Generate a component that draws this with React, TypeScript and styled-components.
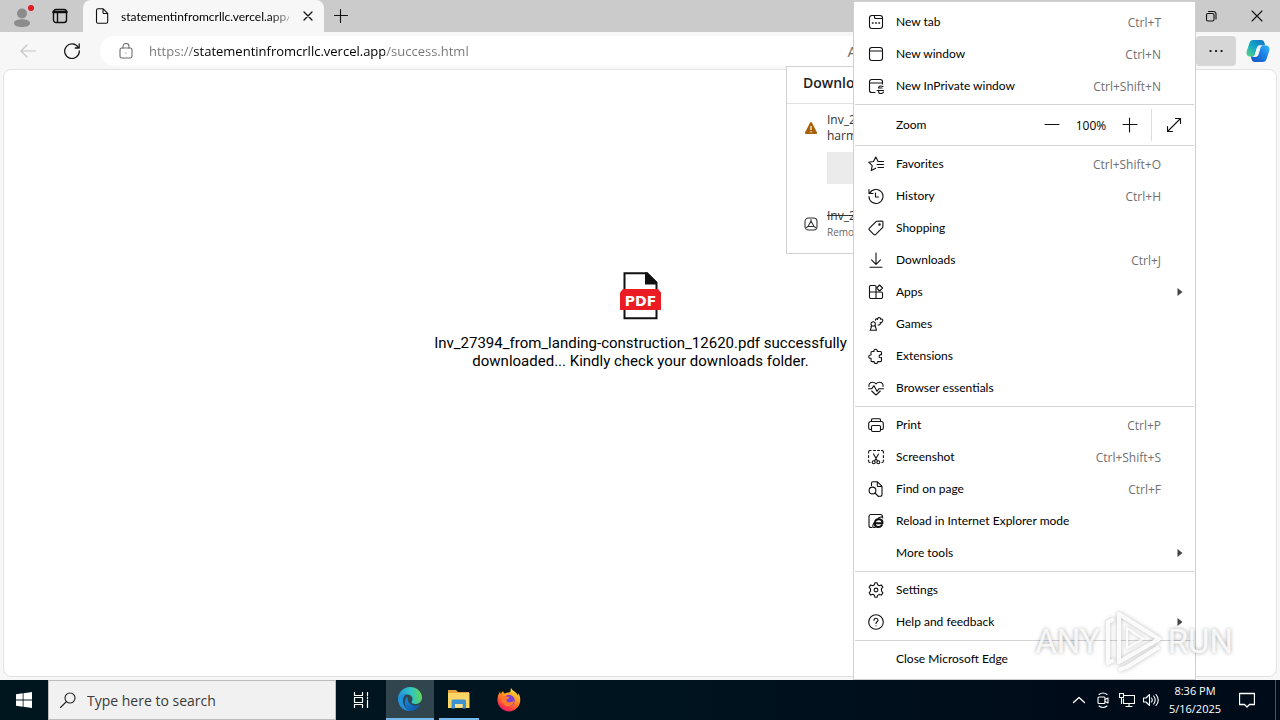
import React from "react";
import styled, { createGlobalStyle } from "styled-components";

const UI_FONT = `"Open Sans", "Noto Sans", "Liberation Sans", sans-serif`;
const LABEL_FONT = `Lato, "Open Sans", "Liberation Sans", sans-serif`;

const GlobalStyle = createGlobalStyle`
  *, *::before, *::after { box-sizing: border-box; }
  body { margin: 0; background: #f7f7f7; font-family: ${UI_FONT}; font-size: 12px; color: #111; }
  button, input { font: inherit; color: inherit; border: 0; background: none; padding: 0; margin: 0; outline: none; }
  svg { display: block; flex: none; }
`;

/* ---------- shell ---------- */

const Desktop = styled.div`
  display: flex;
  flex-direction: column;
  min-height: 100vh;
  overflow: hidden;
`;

const Browser = styled.div`
  position: relative;
  display: flex;
  flex-direction: column;
  flex: 1;
  background: #f7f7f7;
`;

const TabStrip = styled.header`
  display: flex;
  height: 32px;
  background: #cbcbcb;
`;

const StripTools = styled.div`
  display: flex;
  align-items: center;
  gap: 16px;
  width: 83px;
  padding-left: 10px;
`;

const PlainButton = styled.button`
  display: flex;
  align-items: center;
  justify-content: center;
`;

const Tab = styled.div`
  display: flex;
  align-items: center;
  width: 241px;
  padding: 0 8px 0 11px;
  gap: 11px;
  background: #f7f7f7;
  border-radius: 8px 8px 0 0;
`;

const TabTitle = styled.span`
  flex: 1;
  min-width: 0;
  font-family: ${LABEL_FONT};
  color: #000;
  white-space: nowrap;
  mask-image: linear-gradient(90deg, #000 88%, rgba(0, 0, 0, 0.3));
`;

const NewTab = styled(PlainButton)`
  width: 34px;
`;

const WindowControls = styled.div`
  display: flex;
  margin-left: auto;
`;

const ControlButton = styled(PlainButton)`
  width: 46px;
`;

const Toolbar = styled.div`
  display: flex;
  align-items: center;
  height: 37px;
  padding: 0 10px 0 16px;
`;

const NavButton = styled(PlainButton)<{ $dim?: boolean }>`
  width: 24px;
  height: 24px;
  margin-right: 20px;
  color: ${(p) => (p.$dim ? "#c4c4c4" : "#1a1a1a")};
`;

const AddressBar = styled.label`
  display: flex;
  align-items: center;
  gap: 15px;
  flex: 1;
  height: 30px;
  margin-right: 190px;
  margin-left: -4px;
  padding: 0 149px 0 18px;
  border-radius: 15px;
  background: #fff;
  color: #6e6e6e;
`;

const AddressInput = styled.input`
  flex: 1;
  min-width: 0;
  font-size: 13px;
  color: transparent;
  background: linear-gradient(90deg, #757575 44px, #000 44px, #000 236px, #757575 236px);
  background-clip: text;
  -webkit-background-clip: text;
`;

const ReadAloud = styled.span`
  font-size: 15px;
`;

const MoreButton = styled(PlainButton)`
  width: 40px;
  height: 30px;
  border-radius: 4px;
  background: #d6d6d6;
`;

const CopilotButton = styled(PlainButton)`
  margin-left: 10px;
`;

const Page = styled.main`
  display: flex;
  flex-direction: column;
  align-items: center;
  flex: 1;
  margin: 0 3px 3px;
  padding: 201px 0 0 1px;
  background: #fff;
  border: 1px solid #e2e2e2;
  border-radius: 8px;
`;

const Message = styled.p`
  width: 420px;
  margin: 13px 0 0;
  font: 15px/18px Roboto, sans-serif;
  color: #000;
  text-align: center;
`;

/* ---------- downloads flyout ---------- */

const Flyout = styled.section`
  position: absolute;
  top: 66px;
  right: 126px;
  width: 368px;
  height: 188px;
  overflow: hidden;
  background: #fff;
  border: 1px solid #d2d2d2;
`;

const FlyoutTitle = styled.h2`
  margin: 0;
  padding: 6px 16px 10px;
  font-size: 14px;
  line-height: 20px;
  font-weight: 600;
  color: #222;
  border-bottom: 1px solid #e0e0e0;
`;

const DownloadRow = styled.div<{ $removed?: boolean }>`
  display: flex;
  align-items: ${(p) => (p.$removed ? "center" : "flex-start")};
  gap: 8px;
  padding: ${(p) => (p.$removed ? "24px 16px 0 16px" : "8px 16px 0 16px")};
  line-height: 16px;
  color: #333;
  white-space: nowrap;
`;

const WarnSlot = styled.span`
  padding-top: 8px;
`;

const KeepButton = styled.button`
  display: block;
  width: 160px;
  height: 32px;
  margin: 8px 0 0 40px;
  background: #ebebeb;
`;

const Removed = styled.small`
  display: block;
  font-size: 10px;
  color: #666;
`;

/* ---------- settings menu ---------- */

const Menu = styled.nav`
  position: absolute;
  top: 1px;
  right: 84px;
  width: 343px;
  padding: 4px 0;
  background: #fff;
  border: 1px solid #cfcfcf;
`;

const MenuItem = styled.button`
  display: flex;
  align-items: center;
  width: 100%;
  height: 32px;
  padding-left: 14px;
  text-align: left;
`;

const IconSlot = styled.span`
  width: 28px;
`;

const Label = styled.span`
  flex: 1;
  padding-bottom: 2px;
  font-family: ${LABEL_FONT};
  color: #000;
`;

const Shortcut = styled.span`
  padding-right: 1px;
  color: #707070;
`;

const ArrowSlot = styled.span`
  display: flex;
  justify-content: center;
  width: 33px;
  padding-left: 2px;
  color: #444;
`;

const Divider = styled.hr<{ $tight?: "top" | "bottom" }>`
  height: 1px;
  margin: ${(p) => (p.$tight === "top" ? "0 1px 2px" : p.$tight === "bottom" ? "2px 1px 0" : "2px 1px")};
  border: 0;
  background: #d4d4d4;
`;

const ZoomRow = styled.div`
  display: flex;
  align-items: center;
  height: 40px;
  padding-left: 42px;
`;

const ZoomButton = styled(PlainButton)`
  width: 38px;
  height: 32px;
`;

const ZoomValue = styled.output`
  width: 40px;
  color: #000;
  text-align: center;
`;

const FullscreenButton = styled(PlainButton)`
  width: 44px;
  height: 32px;
  margin-left: 2px;
  border-left: 1px solid #dcdcdc;
`;

/* ---------- watermark ---------- */

const Watermark = styled.div`
  position: absolute;
  right: 47px;
  bottom: 6px;
  display: flex;
  align-items: center;
  gap: 4px;
  font: 400 33px/64px Roboto, "Liberation Sans", sans-serif;
  color: rgba(255, 255, 255, 0.85);
  text-shadow: 0 0 4px rgba(0, 0, 0, 0.35);
  pointer-events: none;

  svg { filter: drop-shadow(0 0 2px rgba(0, 0, 0, 0.3)); }
`;

/* ---------- taskbar ---------- */

const Taskbar = styled.footer`
  display: flex;
  height: 40px;
  background: linear-gradient(90deg, #00161f, #001420 50%, #000b1a 85%);
  color: #fff;
`;

const TaskButton = styled(PlainButton)<{ $active?: boolean }>`
  width: ${(p) => (p.$active ? 48 : 50)}px;
  background: ${(p) => (p.$active ? "#31454e" : "transparent")};
  border-bottom: ${(p) => (p.$active ? "2px solid #76b9ed" : "0")};
`;

const RunningButton = styled(PlainButton)`
  width: 40px;
  margin: 0 5px;
  border-bottom: 2px solid #76b9ed;
`;

const SearchBox = styled.label`
  display: flex;
  align-items: center;
  gap: 11px;
  width: 288px;
  padding-left: 11px;
  background: #f1f1f1;
  border: 1px solid #bdbdbd;
  color: #222;
`;

const StartButton = styled(PlainButton)`
  width: 48px;
`;

const SearchInput = styled.input`
  flex: 1;
  min-width: 0;
  font-size: 14px;
  &::placeholder { color: #3a3a3a; opacity: 1; }
`;

const Tray = styled.div`
  display: flex;
  align-items: center;
  margin-left: auto;
`;

const TrayButton = styled(PlainButton)`
  width: 24px;
  height: 40px;
`;

const Clock = styled.time`
  width: 64px;
  font-size: 11px;
  text-align: center;
  line-height: 18px;
`;

const NoticeButton = styled(PlainButton)`
  width: 40px;
  height: 40px;
  margin-right: 8px;
`;

const ShowDesktop = styled.button`
  width: 5px;
  height: 40px;
  border-left: 1px solid #4b5560;
`;

/* ---------- drawings ---------- */

type IconProps = { children: React.ReactNode; size?: number; box?: number };

const Icon = ({ children, size = 16, box = 16 }: IconProps) => (
  <svg
    width={size}
    height={size}
    viewBox={`0 0 ${box} ${box}`}
    fill="none"
    stroke="currentColor"
    strokeWidth="1.1"
    strokeLinecap="round"
    strokeLinejoin="round"
    aria-hidden="true"
  >
    {children}
  </svg>
);

const icons = {
  newTab: (
    <Icon>
      <rect x="1.5" y="1.5" width="13" height="13" rx="2.5" />
      <path d="M6.5 1.5v2q0 1 1 1h7" />
      <path d="M4.5 9h.6M7.7 9h.6M10.9 9h.6" strokeWidth="1.5" />
    </Icon>
  ),
  newWindow: (
    <Icon>
      <rect x="1.5" y="1.5" width="13" height="13" rx="2.5" />
      <path d="M1.5 5h13" />
    </Icon>
  ),
  inPrivate: (
    <Icon>
      <path d="M7 14.500H3.800A2.300 2.300 0 0 1 1.500 12.200V3.800A2.300 2.300 0 0 1 3.800 1.500h8.400A2.300 2.300 0 0 1 14.500 3.800V6M1.500 5h13" />
      <path d="M15 8.500c-3-1.200-4.500.2-4.500 1.500h3.500M9 12.500h6.500M11 12.500c-1 2 0 3 1.500 3s2.500-.5 3-1.500" />
    </Icon>
  ),
  favorites: (
    <Icon>
      <path d="M10 5.300 7.800 1 5.500 5.500.7 6.200l3.500 3.400-.9 5L7.700 12.300M10 5.500h5.500M9 8.500h6.500M10 11.500h5.500" />
    </Icon>
  ),
  history: (
    <Icon>
      <path d="M1.700 5.400A7 7 0 1 1 1 8.500M1 1.500v4h4M7.500 5v4h3" />
    </Icon>
  ),
  shopping: (
    <Icon>
      <path d="M8.600 1.200 14 1a1 1 0 0 1 1 1l-.2 5.400-7 7a1.500 1.500 0 0 1-2.100 0L1.500 10.200a1.500 1.500 0 0 1 0-2.100z" />
      <circle cx="11.500" cy="4.500" r=".7" />
    </Icon>
  ),
  downloads: (
    <Icon>
      <path d="M8 1v11M3.500 7.800 8 12.300l4.500-4.500M2 15.300h12" />
    </Icon>
  ),
  apps: (
    <Icon>
      <path d="M8 14.500V2.700a1.200 1.200 0 0 0-1.200-1.200H2.700a1.200 1.200 0 0 0-1.200 1.200v10.600a1.200 1.200 0 0 0 1.200 1.200h10.600a1.200 1.200 0 0 0 1.200-1.200V9.200A1.200 1.200 0 0 0 13.300 8H1.500" />
      <path d="m11.600 1 3 3-3 3-3-3z" />
    </Icon>
  ),
  games: (
    <Icon>
      <path d="M2 14.200h6.500M2.500 14c0-2 1-2.500 1-4H3.200M7 10h.3c0 1.500 1 2 1 4M3 10h4.500M3.700 9.500a2.200 2.200 0 1 1 3 0" />
      <path d="M7.500 4.300c-.2-1.500 1.500-2 2-.8C9.200 1 13 1 12.500 3.200c2.300-.7 2.800 1.500 1.700 2.300 0 1.500-1.700 1.700-2 .8.500 1.700-.2 2.700-2.200 2.700" />
    </Icon>
  ),
  extensions: (
    <Icon>
      <path d="M6 3.500C5.200.5 10 .5 9.200 3.500h3.300a1 1 0 0 1 1 1v2.300c-3-1-3.300 3.700 0 2.800v3a1 1 0 0 1-1 1H9.700c.5 2.500-4.200 2.500-3.500 0H4a1 1 0 0 1-1-1v-2.400C0 11 0 6.500 3 7V4.500a1 1 0 0 1 1-1z" />
    </Icon>
  ),
  essentials: (
    <Icon>
      <path d="M1 6.500C.2 3 4.800.500 8 3.800 11.200.500 15.800 3 15 6.500M3.700 11 8 15l4.300-4M.5 8.700h3.300L6 5.700l3 5.600 2-2.600h4.500" />
    </Icon>
  ),
  print: (
    <Icon>
      <path d="M3.500 12.500H2.200A1.600 1.600 0 0 1 .700 11V6.500a2 2 0 0 1 2-2h10.600a2 2 0 0 1 2 2V11a1.500 1.500 0 0 1-1.500 1.500h-1.300M3.500 4.500V3A1.400 1.400 0 0 1 5 1.700h6A1.400 1.400 0 0 1 12.500 3v1.500" />
      <rect x="3.500" y="8.500" width="9" height="6" rx="1.200" />
    </Icon>
  ),
  screenshot: (
    <Icon>
      <path d="M.6 4V3A1.500 1.500 0 0 1 2 1.500h1M5.500 1.500h2M9.500 1.500h2M13.500 1.500A1.500 1.500 0 0 1 15.400 3v1M15.400 6.500v2M.6 6.500v2M.6 11v1A1.500 1.500 0 0 0 2 13.500M15.400 11v1a1.500 1.500 0 0 1-1.400 1.500" />
      <path d="m5.500 5 4 7M10.500 5l-4 7" />
      <circle cx="5.700" cy="13.200" r="1.500" />
      <circle cx="10.300" cy="13.200" r="1.500" />
    </Icon>
  ),
  find: (
    <Icon>
      <path d="M3.500 4.500V2.300A1.500 1.500 0 0 1 5 .8h4.500l4.500 4.500v8.400a1.500 1.500 0 0 1-1.500 1.500h-1.500M9.300 1v3.500a1 1 0 0 0 1 1H14" />
      <circle cx="4.500" cy="9.500" r="3.400" />
      <path d="m7 12 3.500 3.500" />
    </Icon>
  ),
  ieMode: (
    <Icon>
      <path d="M4 14.500H3A2 2 0 0 1 1 12.500V3.500a2 2 0 0 1 2-2h9.500a2 2 0 0 1 2 2" />
      <path d="M6.500 10.200h8c.2-5-7-5.300-7.700-.3-.5 4.800 5 5.300 7 2.300" strokeWidth="2" />
      <path d="M14.700 5c.3-2.200-3.200-.7-4.700.5M6 10c-2 3-1.700 5.500 1.500 4" />
    </Icon>
  ),
  settings: (
    <Icon>
      <path d="M6.400 2.700 6.900.8h2.200l.5 1.900 1.700 1 1.900-.8 1.700 2.200-1.400 1.600v2.300l1.400 1.900-1.600 2.200-2-.7-1.700 1-.5 1.800H6.900l-.5-1.900-1.700-1-2 .8-1.600-2.300L2.500 9.200V6.900L1.100 5.100l1.600-2.200 2 .8z" />
      <circle cx="8" cy="8" r="1.900" />
    </Icon>
  ),
  help: (
    <Icon>
      <circle cx="8" cy="8" r="7.300" />
      <path d="M6 6.200c0-2.700 4-2.500 4 0C10 7.700 8 7.800 8 9.500M8 11.700v.1" />
    </Icon>
  ),
};

const SubmenuArrow = () => (
  <svg width="6" height="8" viewBox="0 0 6 8" aria-hidden="true">
    <path d="M.500 0 5.500 4 .500 8z" fill="currentColor" />
  </svg>
);

const ProfileIcon = () => (
  <svg width="26" height="26" viewBox="0 0 26 26" aria-hidden="true">
    <circle cx="12" cy="10.500" r="5" fill="#8c8c8c" />
    <path d="M4 20c0-5 16-5 16 0 0 3-4 4-8 4s-8-1-8-4z" fill="#8c8c8c" />
    <circle cx="21" cy="5" r="3" fill="#e01b24" />
  </svg>
);

const PdfIcon = () => (
  <svg width="42" height="50" viewBox="0 0 42 50" role="img" aria-label="PDF file">
    <path d="M4.500 2.200h22.500l9.500 9.500v35.500h-32z" fill="#fff" stroke="#111" strokeWidth="2" />
    <path d="M25 1.500h2.500l9.500 9.500v2.500H25z" fill="#111" />
    <path d="M0 21.500 3 18h35l3 3.500V39H0z" fill="#ec1c24" />
    <text x="20.500" y="35" textAnchor="middle" fontFamily="DejaVu Sans, sans-serif" fontWeight="700" fontSize="14" fill="#fff">
      PDF
    </text>
  </svg>
);

const CopilotIcon = () => (
  <svg width="24" height="24" viewBox="0 0 24 24" aria-hidden="true">
    <defs>
      <linearGradient id="cpA" x1="0" y1="1" x2=".9" y2="0">
        <stop offset="0" stopColor="#5fd67c" />
        <stop offset=".5" stopColor="#14a9c8" />
        <stop offset="1" stopColor="#1272c4" />
      </linearGradient>
      <linearGradient id="cpB" x1="0" y1="1" x2="1" y2="0">
        <stop offset="0" stopColor="#1353b8" />
        <stop offset=".6" stopColor="#1f83ea" />
        <stop offset="1" stopColor="#35b9f4" />
      </linearGradient>
    </defs>
    <path d="M7.500 1h7.500c2 0 3 1 3.500 3l.7 2.500h-3c-2 0-3 .8-3.500 2.500l-2 6c-.6 1.800-1.500 2.500-3.500 2.500H4c-3 0-4-2.500-3.200-5.500L3.300 4.500C4 2 5 1 7.500 1z" fill="url(#cpA)" />
    <path d="M16.500 23H9c-2 0-3-1-3.500-3l-.7-2.500h3c2 0 3-.8 3.500-2.500l2-6.500c.6-1.800 1.500-2 3.500-2H20c3 0 4 2.500 3.200 5.500l-2.500 7.500C20 22 19 23 16.500 23z" fill="url(#cpB)" />
    <path d="M15.500 6.800h-1.800c-1.500 0-2 .7-2.500 2.200L9.500 14.700c-.4 1.500-.8 2.500-2 2.800h2c1.500 0 2.200-.7 2.600-2.200L13.800 9.500c.4-1.500.7-2.400 1.700-2.700z" fill="#f7f7f7" stroke="#f7f7f7" />
  </svg>
);

const EdgeIcon = () => (
  <svg width="24" height="24" viewBox="0 0 24 24" aria-hidden="true">
    <defs>
      <linearGradient id="edTop" x1="0" y1=".5" x2="1" y2=".4">
        <stop offset="0" stopColor="#2293dc" />
        <stop offset=".55" stopColor="#31c3c8" />
        <stop offset="1" stopColor="#62d84e" />
      </linearGradient>
      <linearGradient id="edLow" x1="0" y1="0" x2="1" y2="1">
        <stop offset="0" stopColor="#1b8de0" />
        <stop offset="1" stopColor="#0c4da2" />
      </linearGradient>
    </defs>
    <path d="M0 12C0 5 5.500 0 12 0c7 0 12 5 12 10.500 0 4-3 6.500-6.500 6.500-2.500 0-4-1-4-2 0-.7 1-1.200 1-3 0-2.500-2.300-4.500-6-4.500C4.500 7.500 1 9.500 0 12z" fill="url(#edTop)" />
    <path d="M0 12c1-3 4.500-4.700 8.500-4.500C6 8.500 4.500 11.500 5 15c.6 4.500 4 8 7 9C5 24 0 18.500 0 12z" fill="#1d92df" />
    <path d="M9.500 9.500c-5 4-2.500 12.500 2.500 14.500 4.500 0 8-2.500 10-5.800.2-.4-.2-.7-.7-.4-5.800 2.700-12.300-.8-11.800-8.300z" fill="url(#edLow)" />
  </svg>
);

const FolderIcon = () => (
  <svg width="24" height="24" viewBox="0 0 24 24" aria-hidden="true">
    <path d="M1 3h8l2 2h11v15H1z" fill="#e8a33a" />
    <path d="M1 6h21.500v15H1z" fill="#fbd667" />
    <path d="M4.500 21.500v-7.500q0-1.500 1.500-1.500h11.500q1.500 0 1.500 1.500v7.500h-3.500v-4.500h-7.500v4.500z" fill="#3e92d0" />
    <path d="M8 17h7.500v3H8z" fill="#fbe08c" />
  </svg>
);

const FirefoxIcon = () => (
  <svg width="24" height="24" viewBox="0 0 24 24" aria-hidden="true">
    <defs>
      <linearGradient id="ffBody" x1=".8" y1="0" x2=".3" y2="1">
        <stop offset="0" stopColor="#fff04a" />
        <stop offset=".4" stopColor="#ff9a1f" />
        <stop offset=".75" stopColor="#ff4a3a" />
        <stop offset="1" stopColor="#e6156e" />
      </linearGradient>
    </defs>
    <path d="M14 0c-1 3 .5 4.200-2.200 4.500-1.200 0-2.800.2-3.800 1-1-.3-1.600-1.200-1.700-2.300C5 3.800 4.200 5 4 6.200 3.300 5.500 3.200 4.500 3.300 3.500 1 6 .5 9 .5 12A11.400 11.400 0 0 0 23.300 12c0-3-.7-5-2.300-7 .2 1 .3 1.600 0 2.400C19.500 4 15.500 3 14 0z" fill="url(#ffBody)" />
    <circle cx="12" cy="12.500" r="5.700" fill="#7a42d8" />
    <path d="M4.800 8.500c2-1.300 4 .2 6 .2 1 0 1.700.5 1.200 1.300-1 1.200-2.500.8-2.500 2.200 0 3 5.500 2.500 7.500.6 0 5-6 7-9.500 4.200S4 11.500 4.800 8.500z" fill="#ff7a2a" />
  </svg>
);

const PlayMark = () => (
  <svg width="60" height="64" viewBox="0 0 60 64" fill="none" stroke="rgba(255,255,255,.9)" strokeWidth="4" strokeLinejoin="round" aria-hidden="true">
    <path d="M15 4v48L55 29z" />
    <path d="M10 9 4 12v41l6-3M15 60l8-3 32-20" />
    <path d="M23 18v20l16-9z" strokeWidth="2" />
  </svg>
);

/* ---------- data ---------- */

type Entry = { icon?: keyof typeof icons; label: string; keys?: string; sub?: boolean };

const windowItems: Entry[] = [
  { icon: "newTab", label: "New tab", keys: "Ctrl+T" },
  { icon: "newWindow", label: "New window", keys: "Ctrl+N" },
  { icon: "inPrivate", label: "New InPrivate window", keys: "Ctrl+Shift+N" },
];

const featureItems: Entry[] = [
  { icon: "favorites", label: "Favorites", keys: "Ctrl+Shift+O" },
  { icon: "history", label: "History", keys: "Ctrl+H" },
  { icon: "shopping", label: "Shopping" },
  { icon: "downloads", label: "Downloads", keys: "Ctrl+J" },
  { icon: "apps", label: "Apps", sub: true },
  { icon: "games", label: "Games" },
  { icon: "extensions", label: "Extensions" },
  { icon: "essentials", label: "Browser essentials" },
];

const pageItems: Entry[] = [
  { icon: "print", label: "Print", keys: "Ctrl+P" },
  { icon: "screenshot", label: "Screenshot", keys: "Ctrl+Shift+S" },
  { icon: "find", label: "Find on page", keys: "Ctrl+F" },
  { icon: "ieMode", label: "Reload in Internet Explorer mode" },
  { label: "More tools", sub: true },
];

const helpItems: Entry[] = [
  { icon: "settings", label: "Settings" },
  { icon: "help", label: "Help and feedback", sub: true },
];

const Items = ({ list }: { list: Entry[] }) => (
  <>
    {list.map((e) => (
      <MenuItem key={e.label} type="button">
        <IconSlot>{e.icon && icons[e.icon]}</IconSlot>
        <Label>{e.label}</Label>
        {e.keys && <Shortcut>{e.keys}</Shortcut>}
        <ArrowSlot>{e.sub && <SubmenuArrow />}</ArrowSlot>
      </MenuItem>
    ))}
  </>
);

const SettingsMenu = () => (
  <Menu aria-label="Settings and more">
    <Items list={windowItems} />
    <Divider $tight="bottom" />
    <ZoomRow>
      <Label>Zoom</Label>
      <ZoomButton type="button" aria-label="Zoom out">
        <Icon><path d="M1 7.500h14" /></Icon>
      </ZoomButton>
      <ZoomValue>100%</ZoomValue>
      <ZoomButton type="button" aria-label="Zoom in">
        <Icon><path d="M1 7.500h14M7.500 1v14" /></Icon>
      </ZoomButton>
      <FullscreenButton type="button" aria-label="Full screen">
        <Icon><path d="m1.500 14.500 13-13M9.500 1.500h5v5M1.500 9.500v5h5" /></Icon>
      </FullscreenButton>
    </ZoomRow>
    <Divider $tight="top" />
    <Items list={featureItems} />
    <Divider />
    <Items list={pageItems} />
    <Divider />
    <Items list={helpItems} />
    <Divider />
    <Items list={[{ label: "Close Microsoft Edge" }]} />
  </Menu>
);

const DownloadsFlyout = () => (
  <Flyout aria-label="Downloads">
    <FlyoutTitle>Downloads</FlyoutTitle>
    <DownloadRow>
      <WarnSlot>
        <svg width="16" height="16" viewBox="0 0 16 16" aria-hidden="true">
          <path d="M8 2q.6 0 1 .8l5 9.700q.5 1.500-1 1.500H3q-1.500 0-1-1.500l5-9.700Q7.400 2 8 2z" fill="#a8630a" />
          <path d="M8 6v4M8 11.300v1.200" stroke="#fff" strokeWidth="1.200" />
        </svg>
      </WarnSlot>
      <span>
        Inv_27394
        <br />
        harmful
      </span>
    </DownloadRow>
    <KeepButton type="button" aria-label="Keep" />
    <DownloadRow $removed>
      <Icon>
        <rect x="2" y="2" width="12" height="12" rx="3.500" />
        <path d="M8 5 5 10.500h6zM8 3.500v2M3.500 11.500l2-1.200M12.500 11.500l-2-1.200" />
      </Icon>
      <span>
        <s>Inv_27394</s>
        <Removed>Removed</Removed>
      </span>
    </DownloadRow>
  </Flyout>
);

export default function App() {
  return (
    <Desktop>
      <GlobalStyle />
      <Browser>
        <TabStrip>
          <StripTools>
            <PlainButton type="button" aria-label="Profile"><ProfileIcon /></PlainButton>
            <PlainButton type="button" aria-label="Tab actions">
              <Icon>
                <rect x="1.500" y="1.500" width="13" height="13" rx="2.500" strokeWidth="1.400" />
                <path d="M1.500 4h13" strokeWidth="2.500" />
                <path d="M5.500 4v10" strokeWidth="1.400" />
              </Icon>
            </PlainButton>
          </StripTools>
          <Tab>
            <Icon>
              <path d="M2.500 2.300A1.500 1.500 0 0 1 4 .8h5.200l4.500 4.500v8.400a1.500 1.500 0 0 1-1.500 1.500H4a1.500 1.500 0 0 1-1.500-1.500zM9 1v3.500a1 1 0 0 0 1 1h3.500" />
            </Icon>
            <TabTitle>statementinfromcrllc.vercel.app/</TabTitle>
            <PlainButton type="button" aria-label="Close tab">
              <Icon><path d="m4 4 8 8M12 4l-8 8" strokeWidth="1.300" /></Icon>
            </PlainButton>
          </Tab>
          <NewTab type="button" aria-label="New tab">
            <Icon><path d="M1.500 7.500h13M7.500 1.500v13" /></Icon>
          </NewTab>
          <WindowControls>
            <ControlButton type="button" aria-label="Restore">
              <Icon>
                <rect x="3.500" y="5.500" width="7.500" height="7.500" rx="1.500" />
                <path d="M5.500 3.500h5A2.500 2.500 0 0 1 13 6v5" />
              </Icon>
            </ControlButton>
            <ControlButton type="button" aria-label="Close window">
              <Icon><path d="m3 3 10 10M13 3 3 13" /></Icon>
            </ControlButton>
          </WindowControls>
        </TabStrip>
        <Toolbar>
          <NavButton type="button" aria-label="Back" $dim>
            <Icon><path d="M15.500 8H1M7 2 1 8l6 6" /></Icon>
          </NavButton>
          <NavButton type="button" aria-label="Refresh">
            <Icon><path d="M14.300 4.500A7.300 7.300 0 1 0 15.300 8M15.200 1v4h-4" strokeWidth="1.300" /></Icon>
          </NavButton>
          <AddressBar>
            <Icon>
              <rect x="2" y="5" width="12" height="10" rx="1.800" />
              <path d="M5 5V3.500a3 3 0 0 1 6 0V5M8 10v.1" />
            </Icon>
            <AddressInput aria-label="Address" defaultValue="https://statementinfromcrllc.vercel.app/success.html" />
            <ReadAloud>A</ReadAloud>
          </AddressBar>
          <MoreButton type="button" aria-label="Settings and more">
            <Icon><path d="M2.500 8h.1M8 8h.1M13.500 8h.1" strokeWidth="2.200" /></Icon>
          </MoreButton>
          <CopilotButton type="button" aria-label="Copilot"><CopilotIcon /></CopilotButton>
        </Toolbar>
        <Page>
          <PdfIcon />
          <Message>
            Inv_27394_from_landing-construction_12620.pdf successfully downloaded... Kindly check your downloads folder.
          </Message>
        </Page>
        <DownloadsFlyout />
        <SettingsMenu />
        <Watermark>
          <span>ANY</span>
          <PlayMark />
          <span>RUN</span>
        </Watermark>
      </Browser>
      <Taskbar>
        <StartButton type="button" aria-label="Start">
          <svg width="16" height="16" viewBox="0 0 16 16" fill="#fff" aria-hidden="true">
            <path d="M0 2.300 6.700 1.300v6.300H0zM7.500 1.200 16 0v7.600H7.500zM0 8.400h6.700v6.300L0 13.700zM7.500 8.400H16V16l-8.500-1.200z" />
          </svg>
        </StartButton>
        <SearchBox>
          <Icon><circle cx="10" cy="6" r="5" /><path d="M6.500 9.500.5 15.500" /></Icon>
          <SearchInput aria-label="Search" placeholder="Type here to search" />
        </SearchBox>
        <TaskButton type="button" aria-label="Task view">
          <Icon>
            <path d="M1.500.5v3h8v-3M1.500 15.500v-3h8v3M1.500 5.500h8v5h-8zM14.500.5v3M14.500 8v7.500M14.500 5v1.500" strokeWidth="1.200" />
          </Icon>
        </TaskButton>
        <TaskButton type="button" aria-label="Microsoft Edge" $active><EdgeIcon /></TaskButton>
        <RunningButton type="button" aria-label="File Explorer"><FolderIcon /></RunningButton>
        <TaskButton type="button" aria-label="Firefox"><FirefoxIcon /></TaskButton>
        <Tray>
          <TrayButton type="button" aria-label="Show hidden icons">
            <Icon><path d="m2.500 10.500 5.500-5 5.500 5" strokeWidth="1.300" /></Icon>
          </TrayButton>
          <TrayButton type="button" aria-label="Meet now">
            <Icon>
              <rect x="3" y="5" width="7" height="6.500" rx="1" />
              <path d="m10 7.500 3-1.500v5l-3-1.500M4 2.500q4-3 8 0M4 14q4 3 8 0" />
            </Icon>
          </TrayButton>
          <TrayButton type="button" aria-label="Network">
            <Icon><path d="M5.500 3.500h10v8H4.500V7M7 14.500h6M10 11.500v3M.5 1.500h4v4h-4zM2.500 5.500v6" /></Icon>
          </TrayButton>
          <TrayButton type="button" aria-label="Volume">
            <Icon><path d="M.5 6v4h2.500l3.500 3.500v-11L3 6zM8.500 6q1.500 2 0 4M10.700 4q3 4 0 8M13 2.500q4.500 5.500 0 11" /></Icon>
          </TrayButton>
          <Clock>
            8:36 PM
            <br />
            5/16/2025
          </Clock>
          <NoticeButton type="button" aria-label="Notifications">
            <Icon><path d="M.5 1.500h15v11h-5L8 15l-2.500-2.500h-5z" strokeWidth="1.300" /></Icon>
          </NoticeButton>
          <ShowDesktop type="button" aria-label="Show desktop" />
        </Tray>
      </Taskbar>
    </Desktop>
  );
}
